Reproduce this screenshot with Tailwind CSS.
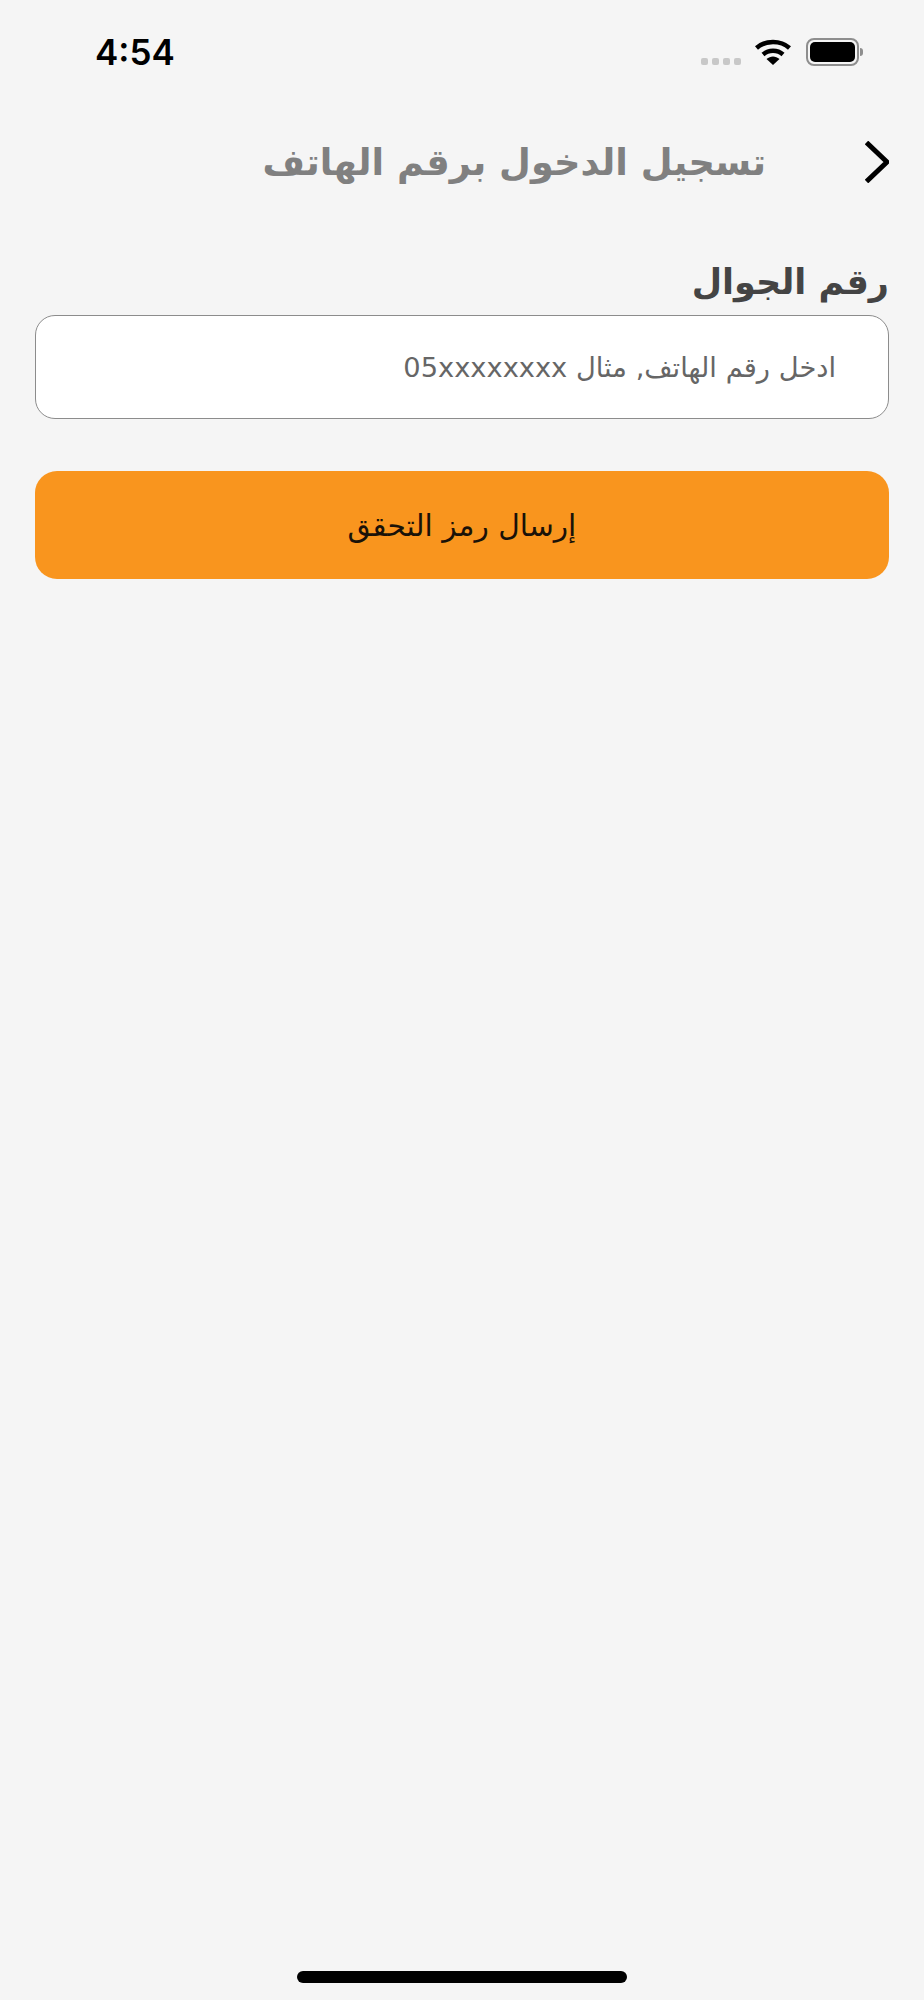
<!DOCTYPE html>
<html lang="ar" dir="rtl">
<head>
    <meta charset="UTF-8">
    <meta name="viewport" content="width=device-width, initial-scale=1.0">
    <title>تسجيل الدخول برقم الهاتف</title>
    <script src="https://cdn.jsdelivr.net/npm/@tailwindcss/browser@4"></script>
</head>
<body class="h-[2000px] w-[924px] bg-[#f5f5f5] font-['DejaVu_Sans',sans-serif] overflow-hidden flex flex-col">

    <!-- status bar -->
    <div dir="ltr" class="h-[80px] flex items-start justify-between pl-[95px] pr-[61px] pt-[38px]">
        <span class="font-['Inter',sans-serif] font-semibold text-[35px] leading-[28px] text-black">4:54</span>
        <div class="flex items-start">
            <div class="flex gap-[4px] mt-[20px] mr-[14px]">
                <span class="w-[7px] h-[7px] rounded-[2px] bg-[#c8c8c8]"></span>
                <span class="w-[7px] h-[7px] rounded-[2px] bg-[#c8c8c8]"></span>
                <span class="w-[7px] h-[7px] rounded-[2px] bg-[#c8c8c8]"></span>
                <span class="w-[7px] h-[7px] rounded-[2px] bg-[#c8c8c8]"></span>
            </div>
            <svg class="mr-[15px] mt-[1px]" width="36" height="26" viewBox="0 0 36 26" fill="none" stroke="black" stroke-width="4.5">
                <path d="M1.500 9C10.500 1 25.500 1 34.500 9"/>
                <path d="M8 15.500C13.500 10.500 22.500 10.500 28 15.500"/>
                <path d="M11.500 20L18 26L24.500 20C20.500 16.500 15.500 16.500 11.500 20Z" fill="black" stroke="none"/>
            </svg>
            <div class="w-[53px] h-[28px] rounded-[8px] border-2 border-[#8e8e8e] p-[2px]">
                <div class="w-full h-full rounded-[5px] bg-black"></div>
            </div>
            <span class="w-[3px] h-[8px] mt-[10px] ml-[1px] rounded-r-[3px] bg-[#8e8e8e]"></span>
        </div>
    </div>

    <!-- header -->
    <div class="h-[80px] mt-[42px] flex items-center pr-[35px]">
        <svg width="24" height="42" viewBox="0 0 24 42" fill="none" stroke="black" stroke-width="5">
            <path d="M1.500 1.500L22 21L1.500 40.500"/>
        </svg>
        <h1 class="mr-[99px] mt-[2px] text-[36.700px] leading-[50px] font-bold text-[#808080]">تسجيل الدخول برقم الهاتف</h1>
    </div>

    <!-- form -->
    <div class="px-[35px] mt-[56px] flex flex-col">
        <label class="text-[35px] leading-[48px] font-bold text-[#444444]">رقم الجوال</label>
        <div class="mt-[9px] h-[104px] flex items-center pr-[52px] pt-[2px] bg-white border border-[#8c8c8c] rounded-[20px] text-[27.300px] text-[#666666]">
            ادخل رقم الهاتف, مثال 05xxxxxxxx
        </div>
        <button class="mt-[52px] h-[108px] pt-[2px] rounded-[22px] bg-[#f9951e] text-[29.700px] text-[#1a1208]">إرسال رمز التحقق</button>
    </div>

    <!-- home indicator -->
    <div class="mt-auto mb-[17px] mx-auto w-[330px] h-[12px] rounded-full bg-black"></div>
</body>
</html>
